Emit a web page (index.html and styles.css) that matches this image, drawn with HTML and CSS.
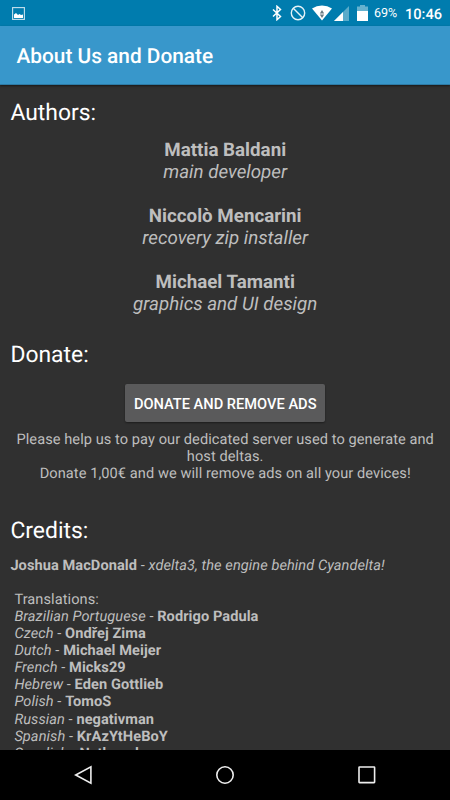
FILE: index.html
```html
<!DOCTYPE html>
<html lang="en">
<head>
  <meta charset="UTF-8">
  <meta name="viewport" content="width=device-width, initial-scale=1.0">
  <title>About Us and Donate</title>
  <link rel="stylesheet" href="styles.css">
</head>
<body>
  <div class="screen">
    <div class="status-bar">
      <svg class="icon-picture" width="13" height="13" viewBox="0 0 13 13">
        <rect x=".6" y=".6" width="11.8" height="11.8" fill="none" stroke="#c5e1ee" stroke-width="1.1"/>
        <path d="M2 11V7.500l2-1.500 2 2 1.500-1L9 8l2-.5V11z" fill="#fff"/>
      </svg>
      <div class="status-right">
        <svg class="icon-bluetooth" width="10" height="16" viewBox="0 0 10 16">
          <path d="M1 4.500l7.500 7L5 14.700V1.300l3.500 3.200L1 11.500" fill="none" stroke="#fff" stroke-width="1.500"/>
        </svg>
        <svg class="icon-block" width="16" height="16" viewBox="0 0 16 16">
          <path d="M3 3l10 10" stroke="#e5f2f7" stroke-width="1.400"/>
          <circle cx="8" cy="8" r="6.700" fill="none" stroke="#e5f2f7" stroke-width="1.400"/>
        </svg>
        <svg class="icon-wifi" width="20" height="16" viewBox="0 0 20 16">
          <path d="M0 3.600Q4.500.6 10 .6t10 3L10 15.600z" fill="#fff"/>
          <path d="M10 5l2.200 3.500H7.800zM10 13L7.800 9.500h4.400z" fill="#687982"/>
        </svg>
        <svg class="icon-signal" width="15" height="15" viewBox="0 0 15 15">
          <path d="M15 0v15H0z" fill="#59abca"/>
          <path d="M9 6v9H0z" fill="#fff"/>
        </svg>
        <svg class="icon-battery" width="11" height="16" viewBox="0 0 11 16">
          <path d="M3 0h5v1.500h3V7H0V1.500h3z" fill="#66b2cf"/>
          <path d="M0 6h11v10H0z" fill="#fff"/>
        </svg>
        <span class="percent">69%</span>
        <span class="clock">10:46</span>
      </div>
    </div>

    <div class="toolbar">
      <h1>About Us and Donate</h1>
    </div>

    <div class="content">
      <h2>Authors:</h2>
      <div class="authors">
        <p><b>Mattia Baldani</b><br><i>main developer</i></p>
        <p><b>Niccolò Mencarini</b><br><i>recovery zip installer</i></p>
        <p><b>Michael Tamanti</b><br><i>graphics and UI design</i></p>
      </div>

      <h2>Donate:</h2>
      <div class="donate">
        <button class="btn">DONATE AND REMOVE ADS</button>
        <p>Please help us to pay our dedicated server used to generate and host deltas.<br>Donate 1,00€ and we will remove ads on all your devices!</p>
      </div>

      <h2>Credits:</h2>
      <p class="credit"><b>Joshua MacDonald</b> - <i>xdelta3, the engine behind Cyandelta!</i></p>
      <ul class="translations">
        <li>Translations:</li>
        <li><i>Brazilian Portuguese</i> - <b>Rodrigo Padula</b></li>
        <li><i>Czech</i> - <b>Ondřej Zima</b></li>
        <li><i>Dutch</i> - <b>Michael Meijer</b></li>
        <li><i>French</i> - <b>Micks29</b></li>
        <li><i>Hebrew</i> - <b>Eden Gottlieb</b></li>
        <li><i>Polish</i> - <b>TomoS</b></li>
        <li><i>Russian</i> - <b>negativman</b></li>
        <li><i>Spanish</i> - <b>KrAzYtHeBoY</b></li>
        <li><i>Swedish</i> - <b>Nathanel</b></li>
      </ul>
    </div>

    <div class="nav-bar">
      <svg width="22" height="22" viewBox="0 0 22 22">
        <path d="M18.900 2.800v16.400L3.700 11z"/>
      </svg>
      <svg width="22" height="22" viewBox="0 0 22 22">
        <circle cx="11" cy="11" r="8.200"/>
      </svg>
      <svg width="22" height="22" viewBox="0 0 22 22">
        <rect x="3" y="3" width="15.600" height="15.600" rx=".5"/>
      </svg>
    </div>
  </div>
</body>
</html>
```
FILE: styles.css
```css
*{
  box-sizing: border-box;
  margin: 0;
  padding: 0;
}

body{
  font-family: Roboto, "Noto Sans", sans-serif;
  text-rendering: geometricPrecision;
  background: #000;
}

.screen{
  display: flex;
  flex-direction: column;
  width: 450px;
  height: 800px;
  overflow: hidden;
  background: #303030;
}

/* status bar */
.status-bar{
  display: flex;
  flex: none;
  align-items: center;
  justify-content: space-between;
  height: 26px;
  padding: 0 8px 0 12px;
  background: #007cae;
  color: #fff;
}
.status-right{
  display: flex;
  align-items: center;
}
.icon-block{
  margin-left: 8px;
}
.icon-wifi{
  margin-left: 6px;
}
.icon-signal{
  margin: 1px 0 0 2px;
}
.icon-battery{
  margin-left: 8px;
}
.percent{
  width: 31px;
  margin-left: 6px;
  padding-top: 2px;
  font-size: 12.500px;
  line-height: 26px;
}
.clock{
  padding-top: 1px;
  font-size: 14.600px;
  font-weight: 500;
  line-height: 28px;
}

/* toolbar */
.toolbar{
  display: flex;
  flex: none;
  align-items: center;
  position: relative;
  height: 59px;
  padding: 3px 0 0 16.500px;
  background: #3897cb;
  border-bottom: 1px solid #2d7ba6;
  box-shadow: 0 1px 2px rgba(0,0,0,0.5);
}
.toolbar h1{
  font-size: 20.830px;
  font-weight: 500;
  color: #fff;
}

/* content */
.content{
  flex: 1;
  min-height: 0;
  padding: 12px 10px 0 10.400px;
  overflow: hidden;
  font-size: 14.580px;
  line-height: 17.050px;
  letter-spacing: .07px;
  color: #bebebe;
}
.content h2{
  padding-top: 2px;
  font-size: 22.900px;
  font-weight: 400;
  line-height: 28px;
  letter-spacing: 0;
  color: #fff;
}
.authors{
  margin: 12px 0 24px;
  font-size: 18.750px;
  line-height: 22px;
  letter-spacing: 0;
  text-align: center;
}
.authors p + p{
  margin-top: 22px;
}
.donate{
  margin-bottom: 33px;
  text-align: center;
}
.btn{
  width: 200px;
  height: 38px;
  margin: 15px 0 9px;
  padding-top: 1px;
  border: none;
  border-radius: 2px;
  background: #5a5a5b;
  box-shadow: 0 1px 2px rgba(0,0,0,0.4);
  font-family: inherit;
  font-size: 14.640px;
  font-weight: 500;
  color: #fff;
  white-space: nowrap;
}
.credit{
  margin: 12px 0 17px;
}
.translations{
  padding-left: 4px;
  list-style: none;
}

/* navigation bar */
.nav-bar{
  display: flex;
  flex: none;
  align-items: center;
  justify-content: center;
  gap: 120px;
  height: 50px;
  background: #000;
}
.nav-bar svg{
  fill: none;
  stroke: #eee;
  stroke-width: 1.600;
}
```
